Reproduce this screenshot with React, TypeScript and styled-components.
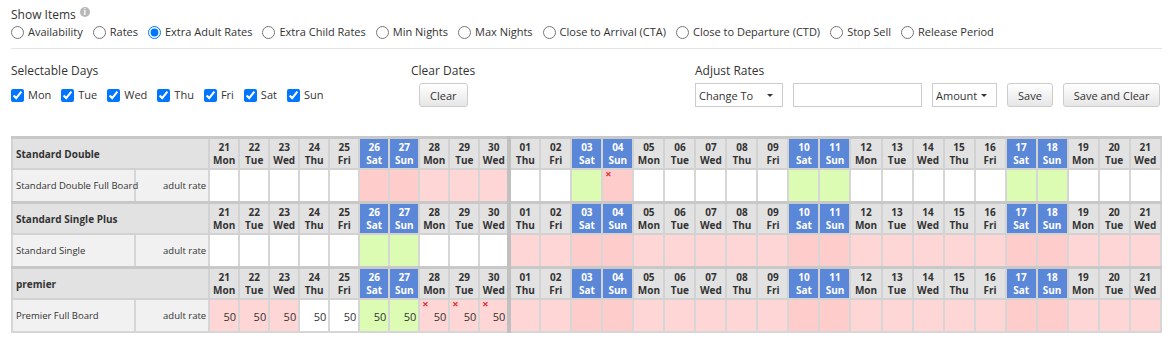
import styled, {createGlobalStyle} from 'styled-components';

const GlobalStyle = createGlobalStyle`
  body {
    margin: 0;
    background: #ffffff;
    font-family: "Open Sans", "Liberation Sans", sans-serif;
    color: #333333;
  }
`;

type Tone = 'w' | 'p' | 'g';
type Day = {num: string; name: string; weekend: boolean};
type Cell = {tone: Tone; cross?: boolean; value?: string};

const NAMES = ['Mon', 'Tue', 'Wed', 'Thu', 'Fri', 'Sat', 'Sun'];

const makeDays = (from: number, to: number, startIdx: number): Day[] => {
  const out: Day[] = [];
  for (let d = from; d <= to; d++) {
    const name = NAMES[(startIdx + d - from) % 7];
    out.push({
      num: String(d).padStart(2, '0'),
      name,
      weekend: name === 'Sat' || name === 'Sun',
    });
  }
  return out;
};

const month1 = makeDays(21, 30, 0);
const month2 = makeDays(1, 21, 3);

const parse = (s: string, value?: string): Cell[] =>
  s.split('').map((c) => ({
    tone: (c === 'x' ? 'p' : c) as Tone,
    cross: c === 'x',
    value,
  }));

const rooms = [
  {
    name: 'Standard Double',
    rate: 'Standard Double Full Board',
    m1: parse('wwwwwppppp'),
    m2: parse('wwgxwwwwwggwwwwwggwww'),
  },
  {
    name: 'Standard Single Plus',
    rate: 'Standard Single',
    m1: parse('wwwwwggwww'),
    m2: parse('ppppppppppppppppppppp'),
  },
  {
    name: 'premier',
    rate: 'Premier Full Board',
    m1: parse('pppwwggxxx', '50'),
    m2: parse('ppppppppppppppppppppp'),
  },
];

const showItems = [
  'Availability',
  'Rates',
  'Extra Adult Rates',
  'Extra Child Rates',
  'Min Nights',
  'Max Nights',
  'Close to Arrival (CTA)',
  'Close to Departure (CTD)',
  'Stop Sell',
  'Release Period',
];

const App = () => {
  return (
    <Page>
      <GlobalStyle />
      <Section>
        <Title>
          Show Items <Info>i</Info>
        </Title>
        <OptionRow>
          {showItems.map((item) => (
            <Option key={item}>
              <input type="radio" name="show" defaultChecked={item === 'Extra Adult Rates'} />
              {item}
            </Option>
          ))}
        </OptionRow>
      </Section>
      <Divider />
      <Controls>
        <Group $width={400}>
          <Title>Selectable Days</Title>
          <OptionRow $tall>
            {NAMES.map((d) => (
              <Option key={d}>
                <input type="checkbox" defaultChecked />
                {d}
              </Option>
            ))}
          </OptionRow>
        </Group>
        <Group $width={284}>
          <Title>Clear Dates</Title>
          <Fields $indent={8}>
            <Button>Clear</Button>
          </Fields>
        </Group>
        <Group>
          <Title>Adjust Rates</Title>
          <Fields>
            <Select $width={88}>Change To</Select>
            <TextBox />
            <Select $width={65}>Amount</Select>
            <Button>Save</Button>
            <Button>Save and Clear</Button>
          </Fields>
        </Group>
      </Controls>
      <Grid>
        <colgroup>
          <col style={{width: 123}} />
          <col style={{width: 74}} />
          {month1.map((d) => (
            <col key={'a' + d.num} style={{width: 30}} />
          ))}
          {month2.map((d) => (
            <col key={'b' + d.num} style={{width: 31}} />
          ))}
        </colgroup>
        <tbody>
          {rooms.map((room) => (
            <RoomBlock key={room.name} room={room} />
          ))}
        </tbody>
      </Grid>
    </Page>
  );
};

const RoomBlock = ({room}: {room: (typeof rooms)[number]}) => (
  <>
    <tr>
      <RoomHead colSpan={2}>{room.name}</RoomHead>
      {month1.map((d, i) => (
        <DayHead key={'a' + d.num} $weekend={d.weekend} $split={i === month1.length - 1}>
          {d.num}
          <br />
          {d.name}
        </DayHead>
      ))}
      {month2.map((d) => (
        <DayHead key={'b' + d.num} $weekend={d.weekend} $split={false}>
          {d.num}
          <br />
          {d.name}
        </DayHead>
      ))}
    </tr>
    <tr>
      <RateName>{room.rate}</RateName>
      <RateType>adult rate</RateType>
      {room.m1.map((c, i) => (
        <DayCell
          key={'a' + i}
          $tone={c.tone}
          $weekend={month1[i].weekend}
          $split={i === month1.length - 1}
        >
          {c.cross && <Cross>×</Cross>}
          {c.value}
        </DayCell>
      ))}
      {room.m2.map((c, i) => (
        <DayCell key={'b' + i} $tone={c.tone} $weekend={month2[i].weekend} $split={false}>
          {c.cross && <Cross>×</Cross>}
          {c.value}
        </DayCell>
      ))}
    </tr>
  </>
);

const Page = styled.div`
  padding: 6px 11px 0 11px;
  width: 1151px;
`;

const Section = styled.div`
  display: flex;
  flex-direction: column;
`;

const Title = styled.div`
  display: flex;
  align-items: center;
  gap: 4px;
  font-size: 12px;
  line-height: 17px;
  color: #333333;
`;

const Info = styled.span`
  display: inline-flex;
  align-items: center;
  justify-content: center;
  width: 10px;
  height: 10px;
  border-radius: 50%;
  background: #b8b8b8;
  color: #ffffff;
  font-size: 8px;
  font-weight: 700;
  line-height: 1;
  margin-top: -5px;
`;

const OptionRow = styled.div<{$tall?: boolean}>`
  display: flex;
  align-items: center;
  gap: 10px;
  height: ${(p) => (p.$tall ? '24px' : '18px')};
`;

const Option = styled.label`
  display: flex;
  align-items: center;
  gap: 4px;
  font-size: 11px;
  line-height: 18px;
  color: #333333;
  input {
    margin: 0;
    width: 13px;
    height: 13px;
    accent-color: #0075ff;
  }
`;

const Divider = styled.div`
  height: 1px;
  background: #e4e4e4;
  margin: 7px 0 13px 0;
`;

const Controls = styled.div`
  display: flex;
  align-items: flex-start;
`;

const Group = styled.div<{$width?: number}>`
  display: flex;
  flex-direction: column;
  gap: 4px;
  width: ${(p) => (p.$width ? `${p.$width}px` : 'auto')};
  flex: ${(p) => (p.$width ? 'none' : '1')};
`;

const Fields = styled.div<{$indent?: number}>`
  display: flex;
  align-items: center;
  gap: 10px;
  padding-left: ${(p) => p.$indent ?? 0}px;
`;

const Button = styled.button`
  height: 24px;
  padding: 0 10px;
  border: 1px solid #cccccc;
  border-radius: 3px;
  background: linear-gradient(#ffffff, #e6e6e6);
  font-family: inherit;
  font-size: 11px;
  color: #333333;
  white-space: nowrap;
  cursor: pointer;
`;

const Select = styled.div<{$width: number}>`
  box-sizing: border-box;
  display: flex;
  align-items: center;
  width: ${(p) => p.$width}px;
  height: 24px;
  padding: 0 3px;
  border: 1px solid #cccccc;
  background: #ffffff;
  font-size: 11px;
  color: #333333;
  &::after {
    content: '';
    margin-left: auto;
    margin-right: 6px;
    border-left: 3px solid transparent;
    border-right: 3px solid transparent;
    border-top: 3px solid #333333;
  }
`;

const TextBox = styled.input`
  box-sizing: border-box;
  width: 129px;
  height: 24px;
  border: 1px solid #cccccc;
  margin: 0;
`;

const Grid = styled.table`
  margin-top: 29px;
  border-collapse: collapse;
  table-layout: fixed;
  width: 1151px;
  font-size: 10px;
`;

const RoomHead = styled.td`
  height: 29px;
  padding: 0 0 0 3px;
  background: #e2e2e2;
  border: 2px solid #d2d2d2;
  border-top: 3px solid #c8c8c8;
  font-weight: 700;
  color: #333333;
`;

const DayHead = styled.td<{$weekend: boolean; $split: boolean}>`
  height: 29px;
  padding: 0;
  text-align: center;
  line-height: 13px;
  font-weight: 700;
  background: ${(p) => (p.$weekend ? '#5b87d8' : '#e2e2e2')};
  color: ${(p) => (p.$weekend ? '#ffffff' : '#333333')};
  border: 2px solid #d2d2d2;
  border-top: 3px solid #c8c8c8;
  border-right: ${(p) => (p.$split ? '4px solid #c0c0c0' : '2px solid #d2d2d2')};
`;

const RateName = styled.td`
  height: 30px;
  padding: 0 0 0 3px;
  background: #f1f1f1;
  border: 2px solid #d6d6d6;
  font-size: 9.5px;
  color: #333333;
  white-space: nowrap;
`;

const RateType = styled(RateName)`
  padding: 0 2px 0 0;
  text-align: right;
`;

const toneColor = (tone: Tone, weekend: boolean) => {
  if (tone === 'p') return weekend ? '#ffcccc' : '#ffd6d6';
  if (tone === 'g') return '#dcfbb3';
  return '#ffffff';
};

const DayCell = styled.td<{$tone: Tone; $weekend: boolean; $split: boolean}>`
  position: relative;
  height: 30px;
  padding: 1px 2px 0 0;
  text-align: right;
  font-size: 11px;
  color: #333333;
  background: ${(p) => toneColor(p.$tone, p.$weekend)};
  border: 2px solid #d6d6d6;
  border-right: ${(p) => (p.$split ? '4px solid #c0c0c0' : '2px solid #d6d6d6')};
`;

const Cross = styled.span`
  position: absolute;
  top: -2px;
  left: 2px;
  color: #e03030;
  font-size: 11px;
  font-weight: 700;
  line-height: 12px;
`;

export default App;
